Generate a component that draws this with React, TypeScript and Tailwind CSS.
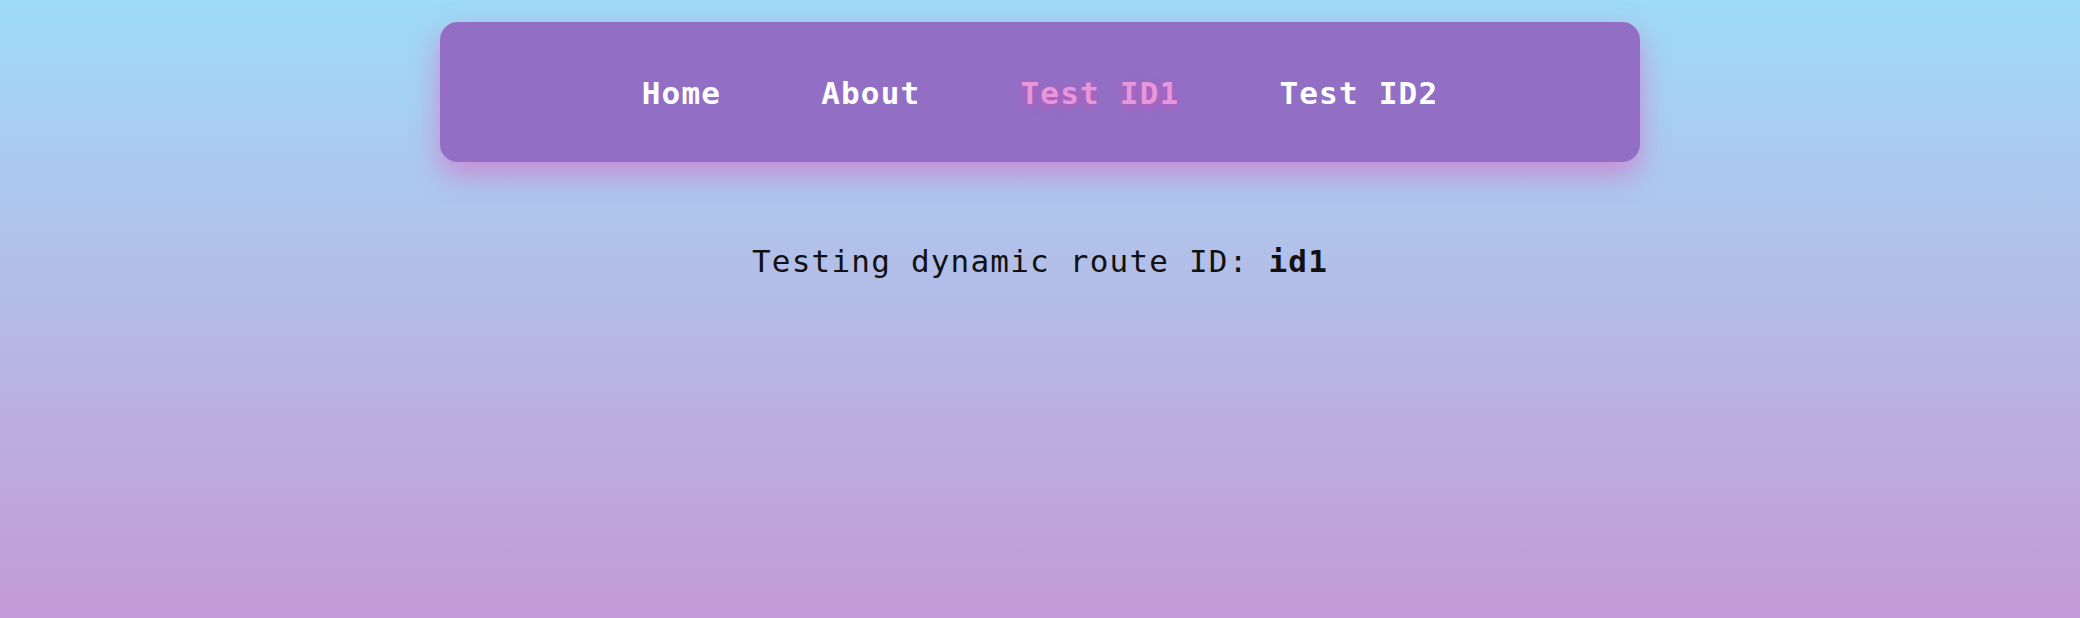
import React from "react";

export default function App() {
  const links = ["Home", "About", "Test ID1", "Test ID2"];
  return (
    <div
      className="min-h-[618px] w-full bg-gradient-to-b from-[#9ddbf7] to-[#c399d6] flex flex-col items-center pt-[22px]"
      style={{ fontFamily: '"DejaVu Sans Mono", "Liberation Mono", monospace' }}
    >
      <nav className="w-[1200px] h-[140px] pt-[3px] rounded-[18px] bg-[#926fc5] shadow-[0_12px_28px_rgba(215,110,200,0.7)] flex items-center justify-center gap-[100px]">
        {links.map((l) => (
          <span
            key={l}
            className={
              "text-[31px] tracking-[1.2px] font-bold leading-none " +
              (l === "Test ID1"
                ? "text-[#e897dc] [text-shadow:0_3px_10px_rgba(215,80,185,0.75)]"
                : "text-white")
            }
          >
            {l}
          </span>
        ))}
      </nav>
      <p className="mt-[76px] text-[31px] tracking-[1.2px] leading-[46px] text-[#111]">
        Testing dynamic route ID: <strong className="font-bold">id1</strong>
      </p>
    </div>
  );
}
